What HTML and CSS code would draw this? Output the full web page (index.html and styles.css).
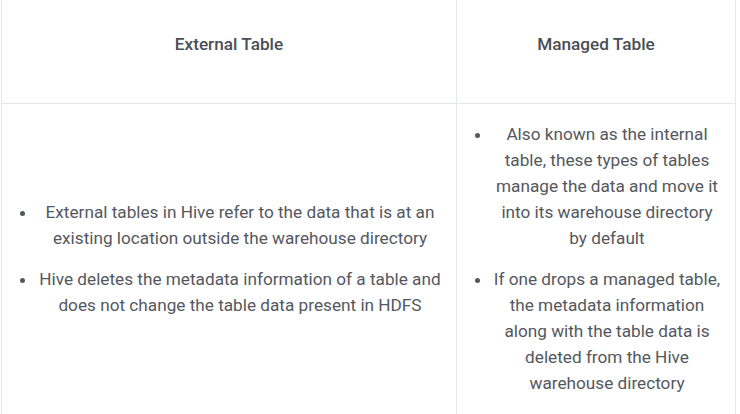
FILE: index.html
```html
<!DOCTYPE html>
<html>
<head>
<meta charset="utf-8">
<link rel="stylesheet" href="styles.css">
</head>
<body>
<div class="wrap">
<table class="cmp">
  <colgroup><col class="c1"><col class="c2"></colgroup>
  <thead>
    <tr>
      <th class="first">External Table</th>
      <th>Managed Table</th>
    </tr>
  </thead>
  <tbody>
    <tr>
      <td class="first">
        <ul>
          <li>External tables in Hive refer to the data that is at an existing location outside the warehouse directory</li>
          <li>Hive deletes the metadata information of a table and does not change the table data present in HDFS</li>
        </ul>
      </td>
      <td>
        <ul>
          <li>Also known as the internal table, these types of tables manage the data and move it into its warehouse directory by default</li>
          <li>If one drops a managed table, the metadata information along with the table data is deleted from the Hive warehouse directory</li>
        </ul>
      </td>
    </tr>
  </tbody>
</table>
</div>
</body>
</html>
```
FILE: styles.css
```css
html, body {
  margin: 0;
  padding: 0;
  background: #ffffff;
}
.wrap {
  padding-left: 1px;
}
.cmp {
  border-collapse: separate;
  border-spacing: 0;
  table-layout: fixed;
  width: 735px;
  font-family: Roboto, "Liberation Sans", sans-serif;
  font-size: 17.2px;
  line-height: 26px;
}
.c1 { width: 456px; }
.c2 { width: 279px; }
.cmp th, .cmp td {
  border-right: 1px solid #e4e8ec;
  border-bottom: 1px solid #e4e8ec;
  text-align: center;
}
.cmp .first {
  border-left: 1px solid #e4e8ec;
}
.cmp th {
  font-weight: 500;
  color: #4a4f56;
  height: 104px;
  box-sizing: border-box;
  padding: 31px 15px 46px;
  vertical-align: top;
}
.cmp td {
  color: #54585e;
  padding: 17px 13px 15px 13px;
  vertical-align: middle;
}
.cmp ul {
  margin: 0;
  padding-left: 22px;
}
.cmp li {
  margin-bottom: 15px;
}
```
